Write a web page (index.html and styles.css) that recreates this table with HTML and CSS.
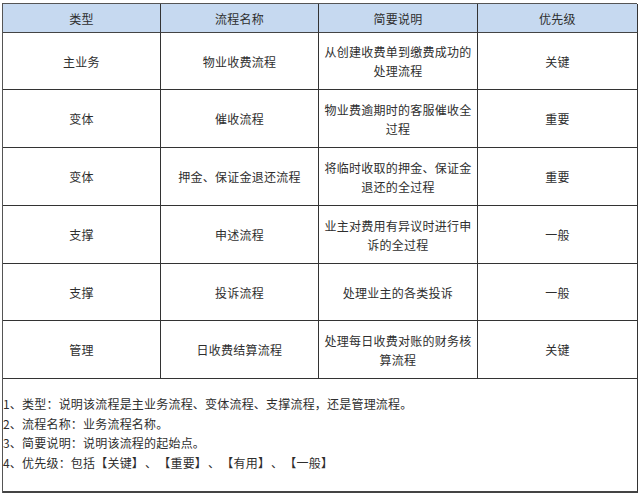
FILE: index.html
```html
<!DOCTYPE html>
<html lang="zh">
<head>
<meta charset="utf-8">
<link rel="stylesheet" href="styles.css">
</head>
<body>
<div class="table">
  <div class="cell head">类型</div>
  <div class="cell head">流程名称</div>
  <div class="cell head">简要说明</div>
  <div class="cell head">优先级</div>

  <div class="cell r57">主业务</div>
  <div class="cell r57">物业收费流程</div>
  <div class="cell r57">从创建收费单到缴费成功的处理流程</div>
  <div class="cell r57">关键</div>

  <div class="cell r58">变体</div>
  <div class="cell r58">催收流程</div>
  <div class="cell r58">物业费逾期时的客服催收全过程</div>
  <div class="cell r58">重要</div>

  <div class="cell r58">变体</div>
  <div class="cell r58">押金、保证金退还流程</div>
  <div class="cell r58">将临时收取的押金、保证金退还的全过程</div>
  <div class="cell r58">重要</div>

  <div class="cell r58">支撑</div>
  <div class="cell r58">申述流程</div>
  <div class="cell r58">业主对费用有异议时进行申诉的全过程</div>
  <div class="cell r58">一般</div>

  <div class="cell r57">支撑</div>
  <div class="cell r57">投诉流程</div>
  <div class="cell r57">处理业主的各类投诉</div>
  <div class="cell r57">一般</div>

  <div class="cell r58">管理</div>
  <div class="cell r58">日收费结算流程</div>
  <div class="cell r58">处理每日收费对账的财务核算流程</div>
  <div class="cell r58">关键</div>

  <div class="notes">
    <p>1、类型：说明该流程是主业务流程、变体流程、支撑流程，还是管理流程。</p>
    <p>2、流程名称：业务流程名称。</p>
    <p>3、简要说明：说明该流程的起始点。</p>
    <p>4、优先级：包括【关键】<span class="sep">、</span>【重要】<span class="sep">、</span>【有用】<span class="sep">、</span>【一般】</p>
  </div>
</div>
</body>
</html>
```

FILE: styles.css
```css
html, body {
  margin: 0;
  padding: 0;
  background: #ffffff;
}

body {
  padding: 3px 0 0 2px;
  font-family: "Noto Sans CJK SC", "Noto Sans", sans-serif;
  color: #2e2e2e;
}

.table {
  display: grid;
  grid-template-columns: 158px 158px 159px 160px;
  width: 635px;
  border-left: 1px solid #555;
  border-top: 1px solid #555;
  box-sizing: border-box;
}

.cell {
  box-sizing: border-box;
  border-right: 1px solid #333;
  border-bottom: 1px solid #333;
  display: flex;
  align-items: center;
  justify-content: center;
  text-align: center;
  font-size: 12px;
  line-height: 19px;
  letter-spacing: 0.25px;
  padding: 0 5px;
  font-weight: 400;
}

.head {
  height: 29px;
  background: #c6d9f0;
  border-bottom-color: #444;
}

.r57 { height: 57px; }
.r58 { height: 58px; }

.notes {
  grid-column: 1 / 5;
  height: 114px;
  box-sizing: border-box;
  border-right: 1px solid #333;
  border-bottom: 2px solid #444;
  padding: 15px 0 0 0;
  font-size: 12px;
  line-height: 19.5px;
  letter-spacing: 0.2px;
}

.notes p {
  margin: 0;
}

.sep {
  margin: 0 7px;
}
```
